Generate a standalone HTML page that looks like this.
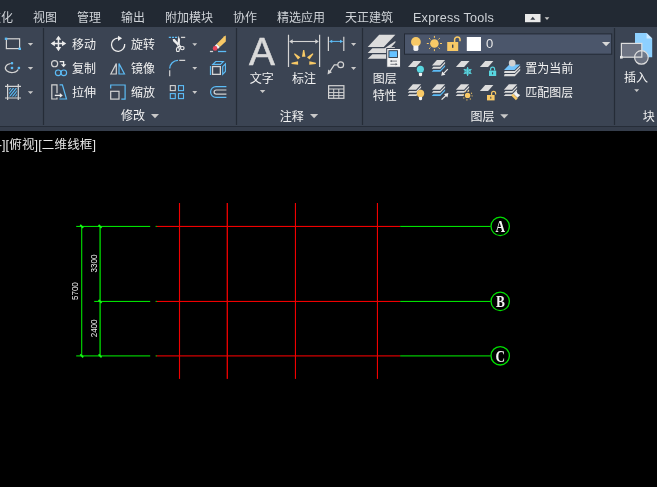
<!DOCTYPE html>
<html lang="zh-CN">
<head>
<meta charset="utf-8">
<title>AutoCAD</title>
<style>
html,body{margin:0;padding:0;background:#000;}
body{width:657px;height:487px;position:relative;overflow:hidden;font-family:"Liberation Sans",sans-serif;}
.tabs{position:absolute;left:0;top:0;width:657px;height:27px;background:#222933;}
.tab-en{position:absolute;left:413px;top:10.8px;font-size:12.6px;line-height:15px;color:#cfd3d8;letter-spacing:0.22px;white-space:nowrap;will-change:transform;}
.ribbon{position:absolute;left:0;top:27px;width:657px;height:99px;background:#3b4453;}
.ribline{position:absolute;left:0;top:125.6px;width:657px;height:1.5px;background:#262d38;}
.ribstrip{position:absolute;left:0;top:127px;width:657px;height:4px;background:#353d4b;}
.canvas{position:absolute;left:0;top:131px;width:657px;height:356px;background:#000;}
svg{position:absolute;left:0;top:0;overflow:visible;will-change:transform;}
.cj{font-family:"Liberation Sans","Noto Sans CJK SC",sans-serif;font-size:12px;}
.tabt{fill:#cfd3d8;}
.lbl{fill:#f2f2f2;}
</style>
</head>
<body>
<div class="tabs"></div>
<div class="ribbon"></div>
<div class="ribstrip"></div>
<div class="ribline"></div>
<div class="canvas"></div>
<div class="tab-en">Express Tools</div>
<svg class="dwg" width="657" height="487" viewBox="0 0 657 487"><rect x="178.95" y="203" width="1.1" height="175.9" fill="#f00000"/>
<rect x="226.65" y="203" width="1.3" height="175.9" fill="#f00000"/>
<rect x="294.9" y="203" width="1.1" height="175.9" fill="#f00000"/>
<rect x="376.9" y="203" width="1.1" height="175.9" fill="#f00000"/>
<rect x="156.4" y="225.9" width="243.8" height="1.1" fill="#f00000"/>
<rect x="400.2" y="225.9" width="90.4" height="1.1" fill="#00e000"/>
<rect x="155.6" y="225.9" width="1.2" height="1.1" fill="#00e000"/>
<rect x="156.4" y="300.9" width="243.8" height="1.1" fill="#f00000"/>
<rect x="400.2" y="300.9" width="90.4" height="1.1" fill="#00e000"/>
<rect x="155.6" y="300.9" width="1.2" height="1.1" fill="#00e000"/>
<rect x="156.4" y="355.35" width="243.8" height="1.1" fill="#f00000"/>
<rect x="400.2" y="355.35" width="90.4" height="1.1" fill="#00e000"/>
<rect x="155.6" y="355.35" width="1.2" height="1.1" fill="#00e000"/>
<rect x="76.2" y="225.9" width="74" height="1.1" fill="#00e000"/>
<rect x="94.2" y="300.9" width="56" height="1.1" fill="#00e000"/>
<rect x="76.2" y="355.35" width="74" height="1.1" fill="#00e000"/>
<rect x="81.15" y="226.45" width="1.1" height="129.45" fill="#00e000"/>
<rect x="99.45" y="226.45" width="1.3" height="129.45" fill="#00e000"/>
<path d="M80.2 224.95L83.2 227.95" stroke="#18f818" stroke-width="1.7"/>
<path d="M98.6 224.95L101.6 227.95" stroke="#18f818" stroke-width="1.7"/>
<path d="M98.6 299.95L101.6 302.95" stroke="#18f818" stroke-width="1.7"/>
<path d="M80.2 354.4L83.2 357.4" stroke="#18f818" stroke-width="1.7"/>
<path d="M98.6 354.4L101.6 357.4" stroke="#18f818" stroke-width="1.7"/>
<circle cx="500.2" cy="226.35" r="9.2" fill="none" stroke="#00e000" stroke-width="1.3"/>
<text transform="translate(500.4 232.05) scale(0.8 1)" text-anchor="middle" font-family="Liberation Serif, serif" font-weight="bold" font-size="16.6" fill="#f4f4f4">A</text>
<circle cx="500.2" cy="301.35" r="9.2" fill="none" stroke="#00e000" stroke-width="1.3"/>
<text transform="translate(500.4 307.05) scale(0.8 1)" text-anchor="middle" font-family="Liberation Serif, serif" font-weight="bold" font-size="16.6" fill="#f4f4f4">B</text>
<circle cx="500.2" cy="355.8" r="9.2" fill="none" stroke="#00e000" stroke-width="1.3"/>
<text transform="translate(500.4 361.5) scale(0.8 1)" text-anchor="middle" font-family="Liberation Serif, serif" font-weight="bold" font-size="16.6" fill="#f4f4f4">C</text>
<text transform="translate(78 291.1) rotate(-90) scale(0.82 1)" text-anchor="middle" font-family="Liberation Sans, sans-serif" font-size="9.8" fill="#f0f0f0">5700</text>
<text transform="translate(96.7 263.5) rotate(-90) scale(0.82 1)" text-anchor="middle" font-family="Liberation Sans, sans-serif" font-size="9.8" fill="#f0f0f0">3300</text>
<text transform="translate(96.7 328.4) rotate(-90) scale(0.82 1)" text-anchor="middle" font-family="Liberation Sans, sans-serif" font-size="9.8" fill="#f0f0f0">2400</text></svg>
<svg class="rib" width="657" height="160" viewBox="0 0 657 160"><text class="cj tabt" x="-11" y="22">数化</text>
<text class="cj tabt" x="33" y="22">视图</text>
<text class="cj tabt" x="77" y="22">管理</text>
<text class="cj tabt" x="121" y="22">输出</text>
<text class="cj tabt" x="165" y="22">附加模块</text>
<text class="cj tabt" x="233" y="22">协作</text>
<text class="cj tabt" x="277" y="22">精选应用</text>
<text class="cj tabt" x="345" y="22">天正建筑</text>
<rect x="525" y="14" width="15.5" height="8.2" fill="#e9e9e9"/>
<path d="M530.3 19.8H535.3L532.8 16.8Z" fill="#3a3f48"/>
<path d="M544.6 17.2H549.4L547 20Z" fill="#c9c9c9"/>
<rect x="42.9" y="28" width="1.2" height="97" fill="#252c37"/>
<rect x="235.9" y="28" width="1.2" height="97" fill="#252c37"/>
<rect x="361.9" y="28" width="1.2" height="97" fill="#252c37"/>
<rect x="613.9" y="28" width="1.2" height="97" fill="#252c37"/>
<rect x="6.4" y="38.8" width="13.2" height="9.8" fill="none" stroke="#d4d4d4" stroke-width="1.2"/>
<rect x="4.8" y="37.6" width="2.5" height="2.4" fill="#5cbcf6"/><rect x="18.5" y="47.6" width="2.5" height="2.4" fill="#5cbcf6"/>
<path d="M27.8 42.9H33.2L30.5 45.8Z" fill="#c9c9c9"/>
<path d="M10.7 63.47A6.6 4.6 0 1 0 18.2 69.5" fill="none" stroke="#d4d4d4" stroke-width="1.2"/>
<rect x="10.8" y="62" width="2.4" height="2.4" rx="0.8" fill="#5cbcf6"/>
<rect x="10.8" y="66.8" width="2.4" height="2.4" rx="0.8" fill="#5cbcf6"/>
<rect x="17.7" y="66.8" width="2.4" height="2.4" rx="0.8" fill="#5cbcf6"/>
<path d="M27.8 67H33.2L30.5 69.8Z" fill="#c9c9c9"/>
<path d="M7.6 84V100M18.3 84V100M5 86.3H21M5 98H21" stroke="#d4d4d4" stroke-width="1.2" fill="none"/>
<clipPath id="hc"><rect x="9.2" y="87.9" width="7.6" height="8.6"/></clipPath>
<path clip-path="url(#hc)" d="M-2 100L11 84M0.9 100L13.9 84M3.8 100L16.8 84M6.7 100L19.7 84M9.6 100L22.6 84M12.5 100L25.5 84M15.4 100L28.4 84M18.3 100L31.3 84" stroke="#5cbcf6" stroke-width="1.1" fill="none"/>
<path d="M27.8 91.3H33.2L30.5 94.1Z" fill="#c9c9c9"/>
<path d="M58.45 37.95V48.95M52.95 43.45H63.95" stroke="#ececec" stroke-width="1.5" fill="none"/>
<path d="M58.45 35.65l2.8 4.2h-5.6zM58.45 51.25l2.8 -4.2h-5.6zM50.65 43.45l4.2 -2.8v5.6zM66.25 43.45l-4.2 -2.8v5.6z" fill="#ececec"/>
<circle cx="54.6" cy="63.7" r="3.05" fill="none" stroke="#d4d4d4" stroke-width="1.2"/>
<path d="M59.6 61.6H63.6V65" fill="none" stroke="#ececec" stroke-width="1.3"/>
<path d="M60.9 64.3H66.3L63.6 67.3Z" fill="#ececec"/>
<circle cx="58.2" cy="72.8" r="2.8" fill="none" stroke="#5cbcf6" stroke-width="1.2"/><circle cx="63.8" cy="72.8" r="2.8" fill="none" stroke="#5cbcf6" stroke-width="1.2"/>
<path d="M57 93.2V84.9H51.8V99H57V97.6" fill="none" stroke="#d4d4d4" stroke-width="1.2"/>
<path d="M59.6 84.9H62.4L66.5 99H59.4" fill="none" stroke="#5cbcf6" stroke-width="1.2"/>
<path d="M54.8 95.4H60.5" stroke="#ececec" stroke-width="1.3"/><path d="M59.8 93.1L62.8 95.4L59.8 97.7Z" fill="#ececec"/>
<path d="M117.87 38.1A6.6 6.6 0 1 0 124.66 44.01" fill="none" stroke="#ececec" stroke-width="1.3"/>
<path d="M118 35.8L122.1 38.3L118 40.9Z" fill="#ececec"/>
<path d="M110.8 74L116.3 63.6V74Z" fill="none" stroke="#d4d4d4" stroke-width="1.2" stroke-linejoin="miter"/>
<path d="M124.5 74L119 63.6V74Z" fill="none" stroke="#5cbcf6" stroke-width="1.2"/>
<path d="M110.7 88.6V85H125.1V99.1H121.3" fill="none" stroke="#5cbcf6" stroke-width="1.2"/>
<rect x="110.7" y="91.3" width="8.3" height="7.8" fill="none" stroke="#d4d4d4" stroke-width="1.2"/>
<path d="M168.8 37.4H177.4" stroke="#5cbcf6" stroke-width="1.3" stroke-dasharray="2.2 0.9"/>
<path d="M181 37.4H185.2" stroke="#d4d4d4" stroke-width="1.3"/>
<path d="M178.5 35.7L180 39.6L179.7 47H177.5L177.8 40Z" fill="#ececec"/>
<path d="M172.7 38.9L174.7 39.1L180.6 45.6L181.8 46.8L179.6 47.6L173.1 41.3Z" fill="#ececec"/>
<ellipse cx="177.9" cy="49.4" rx="1.5" ry="2.1" fill="none" stroke="#ececec" stroke-width="1.15"/><ellipse cx="182.3" cy="48.1" rx="1.8" ry="1.6" fill="none" stroke="#ececec" stroke-width="1.15"/>
<circle cx="178.7" cy="45.3" r="0.5" fill="#3b4453"/>
<path d="M192.3 43.2H197.2L194.75 46Z" fill="#c9c9c9"/>
<path d="M225.8 35.6V41.4L219.8 47.1L216.6 44.1L224.4 36.2Z" fill="#f8c966"/>
<path d="M216.6 44.1L219.8 47.1L217.9 48.9L214.7 45.9Z" fill="#f6f6f6"/>
<circle cx="215.1" cy="48.4" r="2.35" fill="#e9475d"/>
<path d="M209.9 51.5H213.1" stroke="#d4d4d4" stroke-width="1.3"/><path d="M218 51.5H226.2" stroke="#5cbcf6" stroke-width="1.3"/>
<path d="M169.7 68.5A8.3 8.3 0 0 1 178 60.3" fill="none" stroke="#5cbcf6" stroke-width="1.3"/>
<path d="M179.3 60.3H185.2M169.7 70.3V76.2" stroke="#d4d4d4" stroke-width="1.2" fill="none"/>
<path d="M192.3 66.9H197.2L194.75 69.8Z" fill="#c9c9c9"/>
<path d="M210.5 66V75" stroke="#5cbcf6" stroke-width="1.2"/>
<path d="M212.8 64.3L215.7 61.5H223.3L220.5 64.3Z" fill="none" stroke="#5cbcf6" stroke-width="1.15"/>
<path d="M222.7 66.6L225.4 63.8V71.5L222.7 74.3Z" fill="none" stroke="#5cbcf6" stroke-width="1.15"/>
<rect x="212.55" y="66.55" width="7.8" height="7.8" fill="none" stroke="#d4d4d4" stroke-width="1.3"/>
<rect x="170.3" y="85.6" width="5" height="5" fill="none" stroke="#d4d4d4" stroke-width="1.1"/>
<rect x="178.5" y="85.6" width="5" height="5" fill="none" stroke="#5cbcf6" stroke-width="1.1"/>
<rect x="170.3" y="93.6" width="5" height="5" fill="none" stroke="#5cbcf6" stroke-width="1.1"/>
<rect x="178.5" y="93.6" width="5" height="5" fill="none" stroke="#5cbcf6" stroke-width="1.1"/>
<path d="M192.3 91.1H197.2L194.75 94Z" fill="#c9c9c9"/>
<path d="M226.4 86.6H216A5.4 5.4 0 0 0 216 97.4H226.4" fill="none" stroke="#5cbcf6" stroke-width="1.2"/>
<path d="M226.4 90H216.2A2.1 2.1 0 0 0 216.2 94.2H226.4" fill="none" stroke="#d4d4d4" stroke-width="1.2"/>
<text class="cj lbl" x="72" y="48.5">移动</text>
<text class="cj lbl" x="72" y="72.7">复制</text>
<text class="cj lbl" x="72" y="96.6">拉伸</text>
<text class="cj lbl" x="131" y="48.5">旋转</text>
<text class="cj lbl" x="131" y="72.7">镜像</text>
<text class="cj lbl" x="131" y="96.6">缩放</text>
<text class="cj lbl" x="121" y="120.4">修改</text>
<path d="M151 114H159L155 118.2Z" fill="#c9c9c9"/>
<text x="262" y="65" font-family="Liberation Sans, sans-serif" font-size="38.8" fill="#dadada" stroke="#dadada" stroke-width="0.55" text-anchor="middle">A</text>
<text class="cj lbl" x="249.8" y="82.8">文字</text>
<path d="M259.8 90H265.4L262.6 93Z" fill="#c9c9c9"/>
<path d="M288.5 34.8V67M319.6 34.8V67" stroke="#d4d4d4" stroke-width="1.2"/>
<path d="M291 41.5H317" stroke="#d4d4d4" stroke-width="1.1"/>
<path d="M289.2 41.5L292.7 39.3V43.7ZM318.8 41.5L315.3 39.3V43.7Z" fill="#d4d4d4"/>
<path d="M305.45 56.7L301.95 56.7L303.1 50L304.3 50Z" fill="#f8c966"/>
<path d="M309.46 59.61L306.99 57.14L312.61 53.14L313.46 53.99Z" fill="#f8c966"/>
<path d="M300.41 57.14L297.94 59.61L293.94 53.99L294.79 53.14Z" fill="#f8c966"/>
<path d="M309.24 64.84L309.36 61.35L315.91 62.73L315.87 63.93Z" fill="#f8c966"/>
<path d="M298.04 61.35L298.16 64.84L291.53 63.93L291.49 62.73Z" fill="#f8c966"/>
<text class="cj lbl" x="292" y="82.8">标注</text>
<path d="M328.4 36.8V51M343.8 36.8V51" stroke="#d4d4d4" stroke-width="1.2"/>
<path d="M330.5 41.4H341.7" stroke="#5cbcf6" stroke-width="1"/>
<path d="M329 41.4L332.2 39.7V43.1ZM343.2 41.4L340 39.7V43.1Z" fill="#5cbcf6"/>
<path d="M351 43H356.2L353.6 45.9Z" fill="#c9c9c9"/>
<circle cx="340.7" cy="64.8" r="2.9" fill="none" stroke="#d4d4d4" stroke-width="1.2"/>
<path d="M337.8 64.8H334.3L329.8 71.6" fill="none" stroke="#d4d4d4" stroke-width="1.2"/>
<path d="M327.6 74.6L328.2 69.6L332 72.2Z" fill="#d4d4d4"/>
<path d="M351 67H356.2L353.6 69.9Z" fill="#c9c9c9"/>
<rect x="328.6" y="85.7" width="15.3" height="12.6" fill="none" stroke="#d4d4d4" stroke-width="1.2"/>
<path d="M328.6 89H343.9M328.6 92.6H343.9M328.6 95.6H343.9M333.7 89V98.3M338.8 89V98.3" stroke="#d4d4d4" stroke-width="1" fill="none"/>
<text class="cj lbl" x="279.8" y="120.7">注释</text>
<path d="M310 114H318.2L314.1 118.2Z" fill="#c9c9c9"/>
<path d="M379.2 34.8H395.4L383.8 47H367.7Z" fill="#dcdcdc"/>
<path d="M372.4 48.2H384.6L395.4 41V42.5L386 52.9H367.7Z" fill="#dcdcdc"/>
<path d="M372.4 54.2H386.5V58.8H367.7Z" fill="#dcdcdc"/>
<rect x="391" y="47" width="3.8" height="2.5" fill="#c4c4c4"/>
<rect x="386.7" y="48.5" width="13.9" height="18.8" fill="#f1f1f1" stroke="#3b4453" stroke-width="1"/>
<rect x="388.9" y="50.7" width="8.6" height="6.8" fill="#66c2ff" stroke="#2f3540" stroke-width="0.9"/>
<path d="M390.8 61.1H397M390.4 64.3H396.4" stroke="#5a5f68" stroke-width="0.8" fill="none"/>
<path d="M389.8 61.1L391.8 59.9V62.3ZM397.6 64.3L395.6 63.1V65.5Z" fill="#5a5f68"/>
<text class="cj lbl" x="372.8" y="83.2">图层</text>
<text class="cj lbl" x="372.8" y="100">特性</text>
<rect x="404.5" y="33.9" width="207.2" height="20.3" fill="#4b566b" stroke="#232a35" stroke-width="1"/>
<circle cx="415.9" cy="41.9" r="4.9" fill="#f8c966"/>
<path d="M413.4 45.5H418.4V49.5Q418.4 51 415.9 51Q413.4 51 413.4 49.5Z" fill="#f2f2f2"/>
<circle cx="434.4" cy="43.5" r="4.3" fill="#f8c966"/>
<path d="M440 43.5L442 43.5M438.36 47.46L439.77 48.87M434.4 49.1L434.4 51.1M430.44 47.46L429.03 48.87M428.8 43.5L426.8 43.5M430.44 39.54L429.03 38.13M434.4 37.9L434.4 35.9M438.36 39.54L439.77 38.13" stroke="#f8c966" stroke-width="1" fill="none"/>
<rect x="447.2" y="42" width="11" height="9" fill="#f8c966"/>
<path d="M454.6 42V39.6A2.7 2.7 0 0 1 460 39.6V41.2" fill="none" stroke="#f8c966" stroke-width="1.5"/>
<rect x="452" y="44.6" width="1.4" height="3.2" fill="#3b4453"/>
<rect x="466.8" y="37" width="14.2" height="14" fill="#ffffff"/>
<text x="486" y="48.3" font-family="Liberation Sans, sans-serif" font-size="13" fill="#e8e8e8">0</text>
<path d="M602 41.9H610.2L606.1 46.3Z" fill="#d8d8d8"/>
<path d="M413.4 61H421.4L416 67H408Z" fill="#dcdcdc"/>
<circle cx="420.4" cy="69.2" r="3.55" fill="#58d6e0"/>
<path d="M418.9 72.9H422.1V75Q422.1 76.2 420.5 76.2Q418.9 76.2 418.9 75Z" fill="#f2f2f2"/>
<path d="M436.9 60H445.1L440.1 65.5H431.9Z" fill="#dcdcdc"/><path d="M433.4 66.8H440.3L445.1 61.8V63.5L440.3 68.65H431.7Z" fill="#dcdcdc"/><path d="M433.4 70H440.3L445.1 65V66.7L440.3 71.85H431.7Z" fill="#5cbcf6"/>
<path d="M447.8 69.2L443.2 73.8" stroke="#ececec" stroke-width="1.2"/><path d="M441.2 75.8L442.2 71.6L445.4 74.8Z" fill="#ececec"/>
<path d="M461.3 60.9H469.5L464.1 67H455.9Z" fill="#dcdcdc"/>
<path d="M467.6 75.9L467.6 67.1M463.79 73.7L471.41 69.3M463.79 69.3L471.41 73.7" stroke="#58d6e0" stroke-width="1.1" fill="none"/>
<polygon points="470.11,72.95 467.6,74.4 465.09,72.95 465.09,70.05 467.6,68.6 470.11,70.05" fill="none" stroke="#58d6e0" stroke-width="1"/>
<path d="M485.2 60.9H493.4L488.1 67H479.9Z" fill="#dcdcdc"/>
<rect x="489" y="70.6" width="7.2" height="5.4" fill="#58d6e0"/>
<path d="M490.6 70.6V69.2A2 2 0 0 1 494.6 69.2V70.6" fill="none" stroke="#58d6e0" stroke-width="1.2"/>
<rect x="492.1" y="72.3" width="1" height="2" fill="#3b4453"/>
<path d="M509.4 64.4H520.2L514.6 70H504Z" fill="#74c4fb"/>
<circle cx="512.2" cy="63.1" r="3.4" fill="#d0d0d0"/>
<path d="M504.6 71H514.8L520.2 65.8V67.4L514.8 73H504Z" fill="#dcdcdc"/>
<path d="M504.6 74H514.8L520.2 68.8V70.6L514.8 76.2H504Z" fill="#dcdcdc"/>
<text class="cj lbl" x="525.2" y="73">置为当前</text>
<path d="M412.9 84.2H421.1L416.1 89.7H407.9Z" fill="#dcdcdc"/><path d="M409.4 91H416.3L421.1 86V87.7L416.3 92.85H407.7Z" fill="#dcdcdc"/><path d="M409.4 94.2H416.3L421.1 89.2V90.9L416.3 96.05H407.7Z" fill="#dcdcdc"/>
<circle cx="420.5" cy="93.4" r="3.7" fill="#f8c966"/>
<path d="M418.9 96.9H422.1V99Q422.1 100.2 420.5 100.2Q418.9 100.2 418.9 99Z" fill="#f2f2f2"/>
<path d="M436.9 84.2H445.1L440.1 89.7H431.9Z" fill="#dcdcdc"/><path d="M433.4 91H440.3L445.1 86V87.7L440.3 92.85H431.7Z" fill="#dcdcdc"/><path d="M433.4 94.2H440.3L445.1 89.2V90.9L440.3 96.05H431.7Z" fill="#5cbcf6"/>
<path d="M441.6 99.6L446.2 95.2" stroke="#ececec" stroke-width="1.2"/><path d="M448.4 93L447.4 97.4L444 94Z" fill="#ececec"/>
<path d="M460.9 84.2H469.1L464.1 89.7H455.9Z" fill="#dcdcdc"/><path d="M457.4 91H464.3L469.1 86V87.7L464.3 92.85H455.7Z" fill="#dcdcdc"/><path d="M457.4 94.2H464.3L469.1 89.2V90.9L464.3 96.05H455.7Z" fill="#dcdcdc"/>
<circle cx="467.6" cy="95.4" r="3.9" fill="#3b4453"/>
<circle cx="467.6" cy="95.4" r="2.7" fill="#f8c966"/>
<circle cx="467.6" cy="95.4" r="4.5" fill="none" stroke="#f8c966" stroke-width="1.1" stroke-dasharray="1.1 2.43"/>
<path d="M485.2 85H493.4L488.1 91.1H479.9Z" fill="#dcdcdc"/>
<rect x="487" y="95" width="7.6" height="5.4" fill="#f8c966"/>
<path d="M491.6 95V93.4A2 2 0 0 1 495.6 93.4V94.4" fill="none" stroke="#f8c966" stroke-width="1.2"/>
<rect x="490.3" y="96.7" width="1" height="2" fill="#3b4453"/>
<path d="M508.9 84.2H517.1L512.1 89.7H503.9Z" fill="#dcdcdc"/><path d="M505.4 91H512.3L517.1 86V87.7L512.3 92.85H503.7Z" fill="#dcdcdc"/><path d="M505.4 94.2H512.3L517.1 89.2V90.9L512.3 96.05H503.7Z" fill="#dcdcdc"/>
<g transform="translate(514.5 96.9) rotate(-45)"><rect x="-1.3" y="-3.3" width="2.6" height="6.6" fill="#f8c966"/><path d="M1.5 -2.7H5.4L4.6 0L5.4 2.7H1.5Z" fill="#f4f4f4"/></g>
<text class="cj lbl" x="525.2" y="97">匹配图层</text>
<text class="cj lbl" x="470.5" y="120.9">图层</text>
<path d="M500.2 114.2H508.4L504.3 118.4Z" fill="#c9c9c9"/>
<path d="M635 33H646.6L652.2 38.6V57.2H635Z" fill="#8dd0ff"/>
<path d="M646.6 33L652.2 38.6H646.6Z" fill="#cfeaff"/>
<rect x="621.4" y="43.4" width="20.4" height="13.8" fill="#6d7382" stroke="#dedede" stroke-width="1.2"/>
<circle cx="641.4" cy="57.4" r="6.8" fill="#6d7382" fill-opacity="0.93" stroke="#dedede" stroke-width="1.2"/>
<path d="M641.8 50.7V57.2H634.7" fill="none" stroke="#dedede" stroke-width="1.2"/>
<rect x="620" y="55.9" width="2.7" height="2.7" fill="#e6e6e6"/>
<text class="cj lbl" x="624" y="82">插入</text>
<path d="M634.2 89.2H639.2L636.7 92Z" fill="#c9c9c9"/>
<text class="cj lbl" x="642.8" y="121">块</text>
<text x="-6" y="149" textLength="102" lengthAdjust="spacing" font-family="'Liberation Sans','Noto Sans CJK SC',sans-serif" font-size="12.5" fill="#e6e6e6">[-][俯视][二维线框]</text></svg>
</body>
</html>
